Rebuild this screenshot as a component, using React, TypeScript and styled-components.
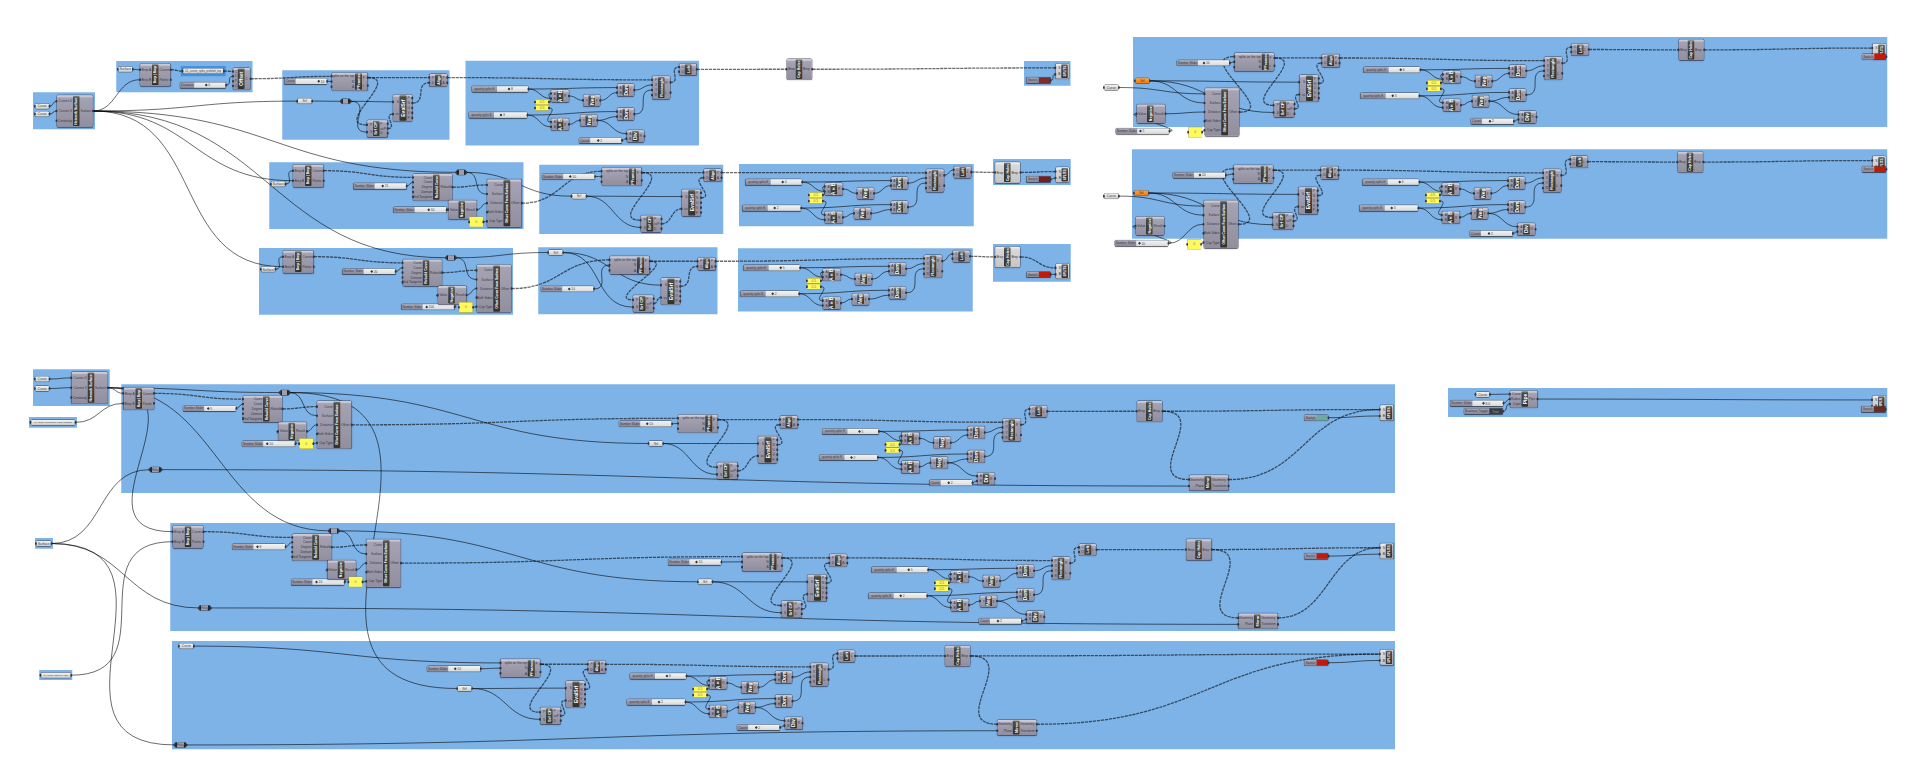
import React from "react";
import styled, { createGlobalStyle, css } from "styled-components";

type Point = [number, number];

interface IGroup {
  x: number;
  y: number;
  w: number;
  h: number;
  selected?: boolean;
}

interface IComp {
  x: number;
  y: number;
  w: number;
  h: number;
  bar: number;
  barW?: number;
  title: string;
  ins: string[];
  outs: string[];
  pale?: boolean;
}

interface IBox {
  kind: "pill" | "panel" | "relay";
  x: number;
  y: number;
  w: number;
  h: number;
  label: string;
  orange?: boolean;
}

interface ISlider {
  x: number;
  y: number;
  w: number;
  labelW: number;
  label: string;
  value: string;
  at: number;
  color?: string;
}

interface IWire {
  from: Point;
  to: Point;
  dashed?: boolean;
}

interface IPorts {
  ins: Point[];
  outs: Point[];
}

const groups: IGroup[] = [];
const comps: IComp[] = [];
const boxes: IBox[] = [];
const sliders: ISlider[] = [];
const wires: IWire[] = [];

const group = (x: number, y: number, w: number, h: number, selected = false) => {
  groups.push({ x, y, w, h, selected });
};

const comp = (c: IComp): IPorts => {
  comps.push(c);
  const spread = (list: string[], x: number): Point[] =>
    list.map((_, i) => [x, c.y + 1 + ((i + 0.5) / list.length) * (c.h - 2)]);
  return { ins: spread(c.ins, c.x - 0.5), outs: spread(c.outs, c.x + c.w + 0.5) };
};

const box = (kind: IBox["kind"], x: number, y: number, w: number, h: number, label = "", orange = false): IPorts => {
  boxes.push({ kind, x, y, w, h, label, orange });
  return { ins: [[x - 0.5, y + h / 2]], outs: [[x + w + 0.5, y + h / 2]] };
};

const pill = (x: number, y: number, w: number, label: string, orange = false) =>
  box("pill", x, y, w, 5, label, orange);

const slider = (x: number, y: number, w: number, labelW: number, label: string, value: string, at: number): Point => {
  sliders.push({ x, y, w, labelW, label, value, at });
  return [x + w + 0.5, y + 2.7];
};

const button = (x: number, y: number, color: string, w = 23.5, labelW = 12, label = "Switch", value = ""): Point => {
  sliders.push({ x, y, w, labelW, label, value, at: 3, color });
  return [x + w + 0.5, y + 2.7];
};

const wire = (from: Point, to: Point, dashed = false) => {
  wires.push({ from, to, dashed });
};

const network = (x: number, y: number) =>
  comp({
    x, y, w: 35.7, h: 31.4, bar: 16, title: "Network Surface",
    ins: ["Curves U", "Curves V", "Continuity"], outs: ["Surface"],
  });

const brep = (x: number, y: number) =>
  comp({ x, y, w: 30, h: 22, bar: 11.7, title: "Brep | Brep", ins: ["Brep A", "Brep B"], outs: ["Curves", "Points"] });

const negative = (x: number, y: number) =>
  comp({ x, y, w: 28, h: 18.3, bar: 10, title: "Negative", ins: ["Value"], outs: ["Result"] });

const offsetCurve = (x: number, y: number) =>
  comp({
    x, y, w: 34, h: 47.5, bar: 16.3, title: "Offset Curve From Surface",
    ins: ["Curve", "Surface", "Distance", "Both Sides", "Cap Type"], outs: ["Offset"],
  });

const capHoles = (x: number, y: number, pale = false) =>
  comp({ x, y, w: 24.8, h: 20.5, bar: 8.7, title: "Cap Holes", ins: ["Brep"], outs: ["Brep"], pale });

const splits = (x: number, y: number, title = "SPLITS") =>
  comp({ x, y, w: 13, h: 14.9, bar: 5.6, barW: 6.4, title, ins: ["S", "B"], outs: [], pale: true });

// rebuild + offset chain, anchored on the rebuild component
const rebuildChain = (
  x: number,
  y: number,
  s: Point,
  s2: Point,
  values: string[],
  at: number[],
  relayAt: Point = [43.5, -4]
) => {
  const rebuild = comp({
    x, y, w: 38.8, h: 26.4, bar: 19.7, title: "Rebuild Curve",
    ins: ["Curve", "Count", "Degree", "Domain", "End Tangents"], outs: ["Rebuild"],
  });
  const count = slider(x + s[0], y + s[1], 52.5, 21, "Number Slider", values[0], at[0]);
  const neg = negative(x + 35.2, y + 26.5);
  const dist = slider(x + s2[0], y + s2[1], 52.5, 21, "Number Slider", values[1], at[1]);
  const offset = offsetCurve(x + 74, y + 5.4);
  const cap = box("panel", x + 56.3, y + 43, 13.3, 9.8, "0");
  const relay = box("relay", x + relayAt[0], y + relayAt[1], 9, 4.7);
  wire(count, rebuild.ins[1]);
  wire(dist, neg.ins[0]);
  wire(rebuild.outs[0], offset.ins[0], true);
  wire(relay.outs[0], offset.ins[1]);
  wire(neg.outs[0], offset.ins[2]);
  wire(cap.outs[0], offset.ins[4]);
  return { input: rebuild.ins[0], out: offset.outs[0], relay };
};

const frames = (
  x: number,
  y: number,
  srf: Point,
  o: { w?: number; evalAt?: Point; cpAt?: Point; alignAt?: Point } = {}
) => {
  const { w = 39.3, evalAt = [80, 21.7], cpAt = [39, 47.9], alignAt = [102, 1.3] } = o;
  const p = comp({
    x, y, w, h: 17.7, bar: w - 12.3, barW: 7, title: "PFrames",
    ins: ["splits on the top", "N", "A"], outs: ["F", "t"],
  });
  const e = comp({
    x: x + evalAt[0], y: y + evalAt[1], w: 18.6, h: 26.6, bar: 6.3, barW: 7, title: "EvalSrf",
    ins: ["S", "uv"], outs: ["P", "N", "U", "V", "F"],
  });
  const cp = comp({
    x: x + cpAt[0], y: y + cpAt[1], w: 20, h: 16.4, bar: 5.6, title: "Srf CP",
    ins: ["P", "S"], outs: ["P", "uvP", "D"],
  });
  const align = comp({
    x: x + alignAt[0], y: y + alignAt[1], w: 17.2, h: 12.3, bar: 5.3, title: "Align",
    ins: ["P", "D"], outs: ["P", "A"],
  });
  wire(p.outs[0], align.ins[0], true);
  wire(p.outs[0], cp.ins[0], true);
  wire(cp.outs[1], e.ins[1], true);
  wire(e.outs[1], align.ins[1], true);
  wire(srf, cp.ins[1]);
  wire(srf, e.ins[0]);
  return { p, align: align.outs[0] };
};

// domain maths feeding the rectangle, anchored on the rectangle component
const rectangles = (x: number, y: number, input: Point, loftAt: Point, values: string[], withDiv = true) => {
  const rect = comp({
    x, y, w: 17.5, h: 22.4, bar: 5.4, title: "Rectangle",
    ins: ["P", "X", "Y", "R"], outs: ["R", "L"],
  });
  const mul = (dx: number, dy: number) =>
    comp({ x: x + dx, y: y + dy, w: 17.4, h: 11.8, bar: 5.4, title: "A×B", ins: ["A", "B"], outs: ["R"] });
  const neg = (dx: number, dy: number) =>
    comp({ x: x + dx, y: y + dy, w: 16.4, h: 11.3, bar: 5, title: "Neg", ins: ["x"], outs: ["y"] });
  const dom = (dx: number, dy: number) =>
    comp({ x: x + dx, y: y + dy, w: 16.4, h: 12, bar: 5, title: "Dom", ins: ["A", "B"], outs: ["I"] });

  const a = slider(x - 180.6, y + 10, 56, 25, "quantity splits H", values[0], 11);
  const b = slider(x - 183.6, y + 36, 58, 25, "quantity splits B", values[1], 6);
  const mulA = mul(-101.2, 13.8);
  const mulB = mul(-101.2, 42.2);
  const negA = neg(-69, 18.4);
  const negB = neg(-72, 38.4);
  const domA = dom(-35, 7.8);
  const domB = dom(-35, 31.8);
  const p1 = box("panel", x - 117, y + 23.4, 13, 4.7, "0.5");
  const p2 = box("panel", x - 117, y + 29.3, 13, 4.7, "0.5");
  const loft = comp({
    x: x + loftAt[0], y: y + loftAt[1], w: 16.8, h: 11.4, bar: 5.3, title: "Loft",
    ins: ["C", "O"], outs: ["L"],
  });
  wire(input, rect.ins[0], true);
  wire(a, domA.ins[0]);
  wire(a, mulA.ins[1]);
  wire(p1.outs[0], mulA.ins[0]);
  wire(p2.outs[0], mulB.ins[0]);
  wire(b, domB.ins[0]);
  wire(b, mulB.ins[1]);
  wire(mulA.outs[0], negA.ins[0]);
  wire(mulB.outs[0], negB.ins[0]);
  wire(negA.outs[0], domA.ins[1]);
  wire(negB.outs[0], domB.ins[1]);
  wire(domA.outs[0], rect.ins[1]);
  wire(domB.outs[0], rect.ins[2]);
  wire(rect.outs[0], loft.ins[0], withDiv);
  if (withDiv) {
    const div = comp({
      x: x - 25.6, y: y + 54, w: 17.2, h: 11.8, bar: 5.3, title: "Div", ins: ["A", "B"], outs: ["R"],
    });
    const count = slider(x - 73.3, y + 61.4, 42.3, 11, "Count", "2", 7);
    wire(negB.outs[0], div.ins[0]);
    wire(count, div.ins[1]);
  }
  return loft.outs[0];
};

/* top left definition */
group(33, 92.3, 62, 37);
group(116.3, 61, 136.3, 31.3);
group(180.7, 66, 45, 10.3, true);
group(282.3, 70.3, 167.3, 69.5);
group(465.5, 60.7, 233.5, 84.7);
group(1024, 61, 46.5, 24.7);
const net1 = network(57, 95.3);
wire(pill(35.3, 103.8, 13.7, "Curve").outs[0], net1.ins[0]);
wire(pill(35.3, 111.5, 13.7, "Curve").outs[0], net1.ins[1]);
const surf1 = net1.outs[0];

const brep1 = brep(140.3, 63.7);
wire(pill(118.3, 66.8, 14, "Surface").outs[0], brep1.ins[0]);
wire(surf1, brep1.ins[1]);
const curvePill = pill(183, 68.6, 40.3, "01_curves_splits_prebholt_top");
wire(brep1.outs[0], curvePill.ins[0], true);
const offsetA = comp({
  x: 233.3, y: 68, w: 16.7, h: 21.5, bar: 4.5, title: "Offset",
  ins: ["C", "D", "P", "C"], outs: ["C"],
});
wire(curvePill.outs[0], offsetA.ins[0], true);
wire(slider(180.3, 82.4, 45.3, 14, "Distance", "0", 11), offsetA.ins[1]);

const srf1 = pill(297.7, 98.6, 14, "Srf");
const relay1 = box("relay", 341.3, 99, 9, 4.6);
wire(surf1, srf1.ins[0]);
wire(srf1.outs[0], relay1.ins[0]);
const frames1 = frames(332, 72.7, relay1.outs[0], { w: 35.3, evalAt: [61.3, 22], cpAt: [35.3, 47.6], alignAt: [97.7, 1.3] });
wire(slider(284.7, 78.6, 42, 11, "Count", "10", 22), frames1.p.ins[1]);
wire(offsetA.outs[0], frames1.p.ins[0], true);
const loft1 = rectangles(652.5, 76.3, frames1.align, [27, -12.6], ["8", "3"]);
const cap1 = capHoles(787, 59);
wire(loft1, cap1.ins[0], true);
const split1 = splits(1055.7, 63.7);
wire(cap1.outs[0], split1.ins[0], true);
wire(button(1026.7, 77.6, "#7d2c2c"), split1.ins[1]);

/* second and third rows */
group(269.3, 162.3, 254.3, 66.7);
group(539.3, 164.7, 184, 69.3);
group(739, 164, 234.7, 62.2);
group(993, 159, 77.7, 26);
const brep2 = brep(293.3, 164.7);
wire(pill(271.3, 181.6, 13.7, "Surface").outs[0], brep2.ins[0]);
wire(surf1, brep2.ins[1]);
const chain2 = rebuildChain(413.3, 174, [-59.6, 9.3], [-19.6, 33], ["15", "10"], [7, 13]);
wire(brep2.outs[0], chain2.input, true);
wire(surf1, chain2.relay.ins[0]);
const srf2 = pill(572, 193.7, 14, "Srf");
wire(chain2.relay.outs[0], srf2.ins[0]);
const frames2 = frames(602, 167.7, srf2.outs[0]);
wire(chain2.out, frames2.p.ins[0], true);
wire(slider(542.3, 173.8, 52.3, 21, "Number Slider", "10", 6), frames2.p.ins[1]);
const loft2 = rectangles(926.3, 169.3, frames2.align, [27.8, -2.9], ["4", "2"], false);
const cap2 = capHoles(995.3, 162.2, true);
wire(loft2, cap2.ins[0], true);
const split2 = splits(1056, 167.3);
wire(cap2.outs[0], split2.ins[0], true);
wire(button(1026.7, 176.6, "#7a1a1a"), split2.ins[1]);

group(259, 248, 254, 66.7);
group(538.3, 247.3, 179.3, 67);
group(738, 248.3, 234.7, 63.3);
group(993, 244, 77.7, 37.7);
const brep3 = brep(283.3, 250.7);
wire(pill(261.3, 266.8, 13.7, "Surface").outs[0], brep3.ins[0]);
wire(surf1, brep3.ins[1]);
const chain3 = rebuildChain(403, 259.4, [-60.3, 9.3], [-1.3, 44.8], ["20", "100"], [7, 3]);
wire(brep3.outs[0], chain3.input, true);
wire(surf1, chain3.relay.ins[0]);
const srf3 = pill(548.7, 250, 14, "Srf");
wire(chain3.relay.outs[0], srf3.ins[0]);
const frames3 = frames(610, 256.3, srf3.outs[0], { evalAt: [51.3, 21.7], cpAt: [23.3, 39], alignAt: [88, 1.4] });
wire(chain3.out, frames3.p.ins[0], true);
wire(slider(541.3, 286.2, 52.3, 21, "Number Slider", "10", 6), frames3.p.ins[1]);
const loft3 = rectangles(924.3, 255, frames3.align, [28.6, -4.4], ["5", "2"], false);
const cap3 = capHoles(995.3, 246.7, true);
wire(loft3, cap3.ins[0], true);
const split3 = splits(1056, 263.7);
wire(cap3.outs[0], split3.ins[0], true);
wire(button(1026.7, 271.7, "#c41808"), split3.ins[1]);

/* top right definitions */
group(1133, 37, 754.3, 90);
group(1132, 149.3, 755.3, 89.5);
const rightRow = (dx: number, dy: number, curveY: number, direct: boolean, sliderX: number, splitY: number) => {
  const curve = pill(1104.3, curveY, 14, "Curve");
  const srf = pill(1135.3 + dx, 78.3 + dy, 14, "Srf", true);
  const neg = negative(1137 + dx, 104.6 + dy);
  const dist = slider(1116 + dx, 128.4 + dy, 53, 21.5, "Number Slider", direct ? "10" : "5", 2);
  const offset = offsetCurve(1205 + dx, 88.3 + dy);
  wire(box("panel", 1188.7 + dx, 127.3 + dy, 13, 9.6, "0").outs[0], offset.ins[4]);
  wire(curve.outs[0], offset.ins[0]);
  wire(srf.outs[0], offset.ins[1]);
  wire(dist, neg.ins[0]);
  wire(direct ? dist : neg.outs[0], offset.ins[2]);
  const f = frames(1234.7 + dx, 53 + dy, srf.outs[0], { evalAt: [65, 22], cpAt: [39.3, 47.7], alignAt: [87.3, 1.4] });
  wire(offset.outs[0], f.p.ins[0], true);
  wire(slider(sliderX, 60.2 + dy, 52.3, 21, "Number Slider", "10", 5), f.p.ins[1]);
  const loft = rectangles(1544.4 + dx, 57.1 + dy, f.align, [27.2, -13.3], ["6", "3"]);
  const cap = capHoles(1679 + dx, 39.6 + dy);
  wire(loft, cap.ins[0], true);
  const split = splits(1872.7, splitY);
  wire(cap.outs[0], split.ins[0], true);
  button(1862.3, splitY + 10.3, "#c41808");
};
rightRow(0, 0, 85, false, 1177, 43.8);
rightRow(-1, 112.2, 193.6, true, 1173, 156.3);

/* bottom definition */
group(33, 369.3, 76.7, 36.7);
group(29, 417, 48, 10.7);
group(35, 538, 18, 10.7);
group(39.3, 670, 33, 10);
group(121.3, 384.3, 1273.7, 108.7);
group(170.3, 523, 1224.7, 108);
group(172, 641, 1223, 108.3);

const net2 = network(71.7, 372);
wire(pill(35.3, 376.5, 13.7, "Curve").outs[0], net2.ins[0]);
wire(pill(35.3, 386, 13.7, "Curve").outs[0], net2.ins[1]);
const planesH = pill(31, 419.9, 44, "PLANOS HORIZONTALES FRENTE");
const surfPill = pill(36.3, 541, 14.6, "Surface");
const planesV = pill(41, 672.7, 29.7, "PLANOS VERTICALES");

const finish = (cap: IPorts, plane: Point, mx: number, my: number, splitY: number, color: string, btnY: number) => {
  const mirror = comp({
    x: mx, y: my, w: 38.8, h: 15, bar: 15.2, title: "Mirror",
    ins: ["Geometry", "Plane"], outs: ["Geometry", "Transform"],
  });
  const split = splits(1380.2, splitY);
  wire(cap.outs[0], mirror.ins[0], true);
  wire(cap.outs[0], split.ins[0], true);
  wire(plane, mirror.ins[1]);
  wire(mirror.outs[0], split.ins[0], true);
  wire(button(1304.5, btnY, color), split.ins[1]);
};

const longRow = (
  dx: number,
  dy: number,
  values: string[],
  splitY: number,
  color: string,
  btnY: number,
  shift = 0
) => {
  const b = brep(123.7 + dx, 387.4 + dy);
  wire(net2.outs[0], b.ins[0]);
  const chain = rebuildChain(243.3 + dx, 395.7 + dy, [-60, 10], [-1, 45.3], values, [3, 3], [36.9, -5.5]);
  wire(b.outs[0], chain.input, true);
  wire(net2.outs[0], chain.relay.ins[0]);
  const srf = pill(649 + dx, 441 + dy, 13.7, "Srf");
  wire(chain.relay.outs[0], srf.ins[0]);
  const f = frames(678.3 + dx + shift, 414.7 + dy, srf.outs[0], {
    evalAt: [80 - shift, 21.7],
    alignAt: [102 - shift, 1.3],
  });
  wire(chain.out, f.p.ins[0], true);
  wire(slider(619.3 + dx, 421 + dy, 52.3, 21, "Number Slider", "10", 6), f.p.ins[1]);
  const loft = rectangles(1003 + dx, 418.7 + dy, f.align, [27, -13], ["5", "2"]);
  const cap = capHoles(1137.2 + dx, 401 + dy);
  wire(loft, cap.ins[0], true);
  const relay = box("relay", 150 + dx, 467.3 + dy, 11, 4.7, "Relay");
  wire(surfPill.outs[0], relay.ins[0]);
  finish(cap, relay.outs[0], 1189.4 + dx, 475.3 + dy, splitY, color, btnY);
  return { b, chain };
};
const row1 = longRow(0, 0, ["5", "10"], 405.3, "#6fa8a0", 415);
const row2 = longRow(49.3, 138.3, ["8", "20"], 543.5, "#c41808", 553.4, 14.8);
wire(planesH.outs[0], row1.b.ins[1]);
wire(planesV.outs[0], row2.b.ins[1]);

const curve3 = pill(179.3, 643.6, 14, "Curve");
const srf4 = pill(457.6, 686, 14, "Srf");
wire(row1.chain.relay.outs[0], srf4.ins[0]);
const frames4 = frames(500.8, 659.3, srf4.outs[0], { evalAt: [65.3, 21.7], cpAt: [39.6, 48.3], alignAt: [87.4, 1.4] });
wire(curve3.outs[0], frames4.p.ins[0]);
wire(slider(427.3, 666, 53, 21, "Number Slider", "10", 6), frames4.p.ins[1]);
const loft4 = rectangles(810.6, 663.3, frames4.align, [27.4, -13], ["6", "2"]);
const cap4 = capHoles(945.3, 645.7);
wire(loft4, cap4.ins[0], true);
const relay4 = box("relay", 175, 742.6, 11, 4.7, "Relay");
wire(surfPill.outs[0], relay4.ins[0]);
finish(cap4, relay4.outs[0], 997.6, 720, 649.8, "#c41808", 660);

/* pipe definition */
group(1448, 388, 439.3, 29);
const pipe = comp({
  x: 1510.2, y: 390.7, w: 27, h: 16.7, bar: 11.2, title: "Pipe",
  ins: ["Curve", "Radius", "Caps"], outs: ["Pipe"],
});
wire(pill(1476, 391.9, 13.4, "Curve").outs[0], pipe.ins[0]);
wire(slider(1450.5, 400.6, 52.5, 22, "Number Slider", "8.0", 10), pipe.ins[1]);
wire(button(1464.3, 408.6, "#3b3d3b", 38.3, 25, "Boolean Toggle", "True"), pipe.ins[2]);
const pipeSplit = splits(1872.4, 395.7, "PIPES");
wire(pipe.outs[0], pipeSplit.ins[0]);
button(1861.7, 406.6, "#6a2c1f");

const wirePath = ({ from: [x1, y1], to: [x2, y2] }: IWire) => {
  const bend = Math.max(Math.abs(x2 - x1) * 0.5, Math.abs(y2 - y1) * 0.73);
  return `M${x1} ${y1} C${x1 + bend} ${y1} ${x2 - bend} ${y2} ${x2} ${y2}`;
};

// largest type that still fits a run of the given length
const fit = (text: string, room: number, max: number, bold = false) => {
  const em = text === text.toUpperCase() ? 0.7 : bold ? 0.57 : 0.5;
  return Math.min(max, room / (text.length * em));
};

const GlobalStyle = createGlobalStyle`
  * {
    box-sizing: border-box;
  }
  body {
    margin: 0;
    background: #fff;
    overflow: hidden;
  }
`;

const Viewport = styled.div`
  width: 1915px;
  height: 783px;
  overflow: hidden;
`;

// laid out four times larger and scaled back, so that fractions of a pixel survive
const Canvas = styled.div`
  position: relative;
  width: 1915px;
  height: 783px;
  zoom: 4;
  transform: scale(0.25);
  transform-origin: 0 0;
  background: #fff;
  font-family: "Liberation Sans", Arial, sans-serif;
  line-height: 1;
`;

const place = css<{ $x: number; $y: number; $w: number; $h: number }>`
  position: absolute;
  left: ${(p) => p.$x}px;
  top: ${(p) => p.$y}px;
  width: ${(p) => p.$w}px;
  height: ${(p) => p.$h}px;
`;

const Group = styled.div<{ $x: number; $y: number; $w: number; $h: number; $selected?: boolean }>`
  ${place}
  background: ${(p) => (p.$selected ? "#4492e0" : "#7eb3e8")};
`;

const Wires = styled.svg`
  position: absolute;
  left: 0;
  top: 0;
  fill: none;
  stroke: rgba(0, 0, 0, 0.58);
`;

const Component = styled.div<{ $x: number; $y: number; $w: number; $h: number; $pale?: boolean }>`
  ${place}
  display: flex;
  border-radius: 1.2px;
  color: #3b3a45;
  background: ${(p) =>
    p.$pale
      ? "linear-gradient(#f4f4f4 0, #d9d9d9 3px, #c4c4c4 100%)"
      : "linear-gradient(#cfced8 0, #c6c5cf 1.6px, #a5a3b3 2.6px, #918f9e 100%)"};
  box-shadow: 0 0 0 0.5px rgba(60, 60, 75, 0.8), 0 0.4px 1.2px rgba(40, 40, 60, 0.6);
`;

const Ports = styled.div<{ $w?: number }>`
  display: flex;
  flex-direction: column;
  width: ${(p) => (p.$w === undefined ? "auto" : p.$w + "px")};
  flex: ${(p) => (p.$w === undefined ? "1" : "none")};
  min-width: 0;
  padding: 1px 0;
`;

const Port = styled.div<{ $right?: boolean }>`
  position: relative;
  flex: 1;
  min-height: 0;
  display: flex;
  align-items: center;
  justify-content: ${(p) => (p.$right ? "flex-start" : "flex-end")};
  padding: 0 0.8px;
  font-size: 3.3px;
  line-height: 3px;
  letter-spacing: -0.05px;
  white-space: nowrap;
  &::after {
    content: "";
    position: absolute;
    ${(p) => (p.$right ? "right: -1.4px;" : "left: -1.4px;")}
    top: calc(50% - 1.3px);
    width: 2px;
    height: 2.6px;
    border-radius: 1px;
    background: #33363f;
  }
`;

const Bar = styled.div<{ $w: number; $size: number }>`
  display: flex;
  flex: none;
  align-items: center;
  justify-content: center;
  width: ${(p) => p.$w}px;
  margin: 0.6px 0;
  border-radius: 0.8px;
  background: linear-gradient(#85857f 0, #4a4a48 2px, #32332f 100%);
  color: #fff;
  font-size: ${(p) => p.$size}px;
  font-weight: 700;
  & > span {
    writing-mode: vertical-rl;
    transform: rotate(180deg);
    white-space: nowrap;
  }
`;

const pins = css`
  &::before,
  &::after {
    content: "";
    position: absolute;
    top: calc(50% - 1.3px);
    width: 1.8px;
    height: 2.6px;
    border-radius: 1px;
    background: #33363f;
  }
  &::before {
    left: -1.4px;
  }
  &::after {
    right: -1.4px;
  }
`;

const Label = styled.div<{ $x: number; $y: number; $w: number; $h: number; $size: number; $orange?: boolean }>`
  ${place}
  ${pins}
  display: flex;
  align-items: center;
  justify-content: center;
  border-radius: 1.2px;
  background: ${(p) =>
    p.$orange ? "linear-gradient(#ffa23f, #f07a0a)" : "linear-gradient(#f4f4f4, #cccccb)"};
  color: ${(p) => (p.$orange ? "#6b3000" : "#444")};
  box-shadow: 0 0 0 0.5px rgba(50, 50, 55, 0.8), 0 0.2px 1px rgba(0, 0, 0, 0.5);
  font-size: ${(p) => p.$size}px;
  white-space: nowrap;
`;

const Panel = styled(Label)`
  border-radius: 0;
  background: #fffa5c;
  color: #84803a;
  box-shadow: 0 0 0 0.4px #a39f50, 0 0 1px rgba(80, 80, 30, 0.4);
`;

const Relay = styled(Label)`
  background: linear-gradient(
    90deg,
    #232427 0,
    #232427 1.8px,
    #a09eab 1.9px,
    #a09eab calc(100% - 1.9px),
    #232427 calc(100% - 1.8px)
  );
  color: #45434e;
`;

const SliderBox = styled.div<{ $x: number; $y: number; $w: number; $h: number }>`
  ${place}
  ${pins}
  &::before {
    display: none;
  }
  display: flex;
  border-radius: 1px;
  box-shadow: 0 0 0 0.5px rgba(60, 60, 70, 0.8), 0 0.3px 1px rgba(0, 0, 0, 0.5);
  font-size: 3.3px;
`;

const SliderName = styled.div<{ $w: number; $size: number }>`
  display: flex;
  flex: none;
  align-items: center;
  justify-content: center;
  width: ${(p) => p.$w}px;
  background: linear-gradient(#aeacba, #878592);
  color: #3b3946;
  font-size: ${(p) => p.$size}px;
  white-space: nowrap;
`;

const Track = styled.div<{ $at: number; $color?: string }>`
  flex: 1;
  display: flex;
  align-items: center;
  gap: 1px;
  padding-left: ${(p) => p.$at}px;
  background: ${(p) => p.$color || "linear-gradient(#f4f4f4, #dadad8)"};
  color: ${(p) => (p.$color ? "#a5a8a5" : "#444")};
  white-space: nowrap;
`;

const Knob = styled.i`
  width: 2px;
  height: 2px;
  background: #333;
  transform: rotate(45deg);
`;

const Slider = ({ s }: { s: ISlider }) => (
  <SliderBox $x={s.x} $y={s.y} $w={s.w} $h={5.4}>
    <SliderName $w={s.labelW} $size={fit(s.label, s.labelW - 1, 3.4)}>
      {s.label}
    </SliderName>
    <Track $at={s.at} $color={s.color}>
      {!s.color && <Knob />}
      {s.value}
    </Track>
  </SliderBox>
);

// switches parked on top of the last component of a row
const overlaps = (s: ISlider) => s.x > 1800;

const App = () => {
  return (
    <Viewport>
      <GlobalStyle />
      <Canvas>
        {groups.map((g, i) => (
          <Group key={i} $x={g.x} $y={g.y} $w={g.w} $h={g.h} $selected={g.selected} />
        ))}
        <Wires width="1915" height="783" viewBox="0 0 1915 783">
          {wires.map((w, i) => (
            <path
              key={i}
              d={wirePath(w)}
              strokeWidth={w.dashed ? 1.3 : 1}
              strokeDasharray={w.dashed ? "3.2 0.8" : undefined}
            />
          ))}
        </Wires>
        {sliders
          .filter((s) => !overlaps(s))
          .map((s, i) => (
            <Slider key={i} s={s} />
          ))}
        {comps.map((c, i) => (
          <Component key={i} $x={c.x} $y={c.y} $w={c.w} $h={c.h} $pale={c.pale}>
            <Ports $w={c.bar}>
              {c.ins.map((name, n) => (
                <Port key={n}>{name}</Port>
              ))}
            </Ports>
            <Bar $w={c.barW || 6.6} $size={fit(c.title, c.h - 2, 5, true)}>
              <span>{c.title}</span>
            </Bar>
            <Ports>
              {c.outs.map((name, n) => (
                <Port key={n} $right>
                  {name}
                </Port>
              ))}
            </Ports>
          </Component>
        ))}
        {boxes.map((b, i) => {
          const Box = b.kind === "panel" ? Panel : b.kind === "relay" ? Relay : Label;
          const room = b.kind === "relay" ? b.w - 4 : b.w - 2;
          return (
            <Box key={i} $x={b.x} $y={b.y} $w={b.w} $h={b.h} $size={fit(b.label || "-", room, 3.4)} $orange={b.orange}>
              {b.label}
            </Box>
          );
        })}
        {sliders.filter(overlaps).map((s, i) => (
          <Slider key={i} s={s} />
        ))}
      </Canvas>
    </Viewport>
  );
};

export default App;
